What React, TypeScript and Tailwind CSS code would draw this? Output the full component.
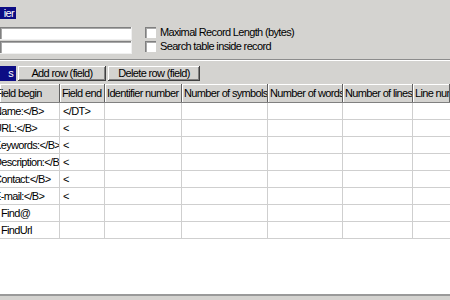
const font = { fontFamily: '"Liberation Sans", Arial, sans-serif', letterSpacing: "-0.65px" };

const headers = [
  "Field begin",
  "Field end",
  "Identifier number",
  "Number of symbols",
  "Number of words",
  "Number of lines",
  "Line number",
];

const rows: { begin: string; cut: boolean; end: string }[] = [
  { begin: "Name:</B>", cut: true, end: "</DT>" },
  { begin: "URL:</B>", cut: true, end: "<" },
  { begin: "Keywords:</B>", cut: true, end: "<" },
  { begin: "Description:</B>", cut: true, end: "<" },
  { begin: "Contact:</B>", cut: true, end: "<" },
  { begin: "E-mail:</B>", cut: true, end: "<" },
  { begin: "Find@", cut: false, end: "" },
  { begin: "FindUrl", cut: false, end: "" },
];

const raised =
  "shadow-[inset_-1px_-1px_#404040,inset_1px_1px_#ffffff,inset_-2px_-2px_#808080]";
const sunken = "shadow-[inset_1px_1px_#808080,inset_2px_2px_#a8a8a8]";

function Check({ label }: { label: string }) {
  return (
    <div className="flex items-center gap-[4px] h-[11px]">
      <div className={`w-[11px] h-[11px] bg-white ${sunken}`} />
      <span className="text-[11px] leading-none text-black">{label}</span>
    </div>
  );
}

export default function App() {
  return (
    <div
      className="w-[450px] h-[300px] overflow-hidden flex flex-col bg-[#d4d3d0] text-black"
      style={font}
    >
      {/* top panel */}
      <div className="h-[60px] border-b border-[#8c8c8c] flex flex-col">
        <div className="pt-[7px]">
          <div className="w-[16px] h-[12px] bg-[#0c0c84] text-white text-[11px] leading-[12px] text-right pr-[2px] overflow-hidden">
            ier
          </div>
        </div>
        <div className="mt-[8px] flex">
          <div className="w-[132px] flex flex-col gap-[1px]">
            <div className={`h-[13px] bg-white border-b border-r border-[#f0f0f0] ${sunken}`} />
            <div className={`h-[13px] bg-white border-b border-r border-[#f0f0f0] ${sunken}`} />
          </div>
          <div className="ml-[13px] flex flex-col gap-[3px]">
            <Check label="Maximal Record Length (bytes)" />
            <Check label="Search table inside record" />
          </div>
        </div>
      </div>

      {/* toolbar */}
      <div className="h-[24px] border-t border-white flex items-start pt-[5px] gap-[2px]">
        <div className="w-[16px] h-[15px] bg-[#0c0c84] text-white text-[11px] leading-[15px] text-right pr-[3px]">
          s
        </div>
        <button className={`w-[88px] h-[15px] bg-[#d4d3d0] text-[11px] leading-[15px] ${raised}`}>
          Add row (field)
        </button>
        <button className={`w-[92px] h-[15px] bg-[#d4d3d0] text-[11px] leading-[15px] ${raised}`}>
          Delete row (field)
        </button>
      </div>

      {/* grid */}
      <div className="flex-1 bg-white flex flex-col">
        <div className="grid grid-cols-[60px_45px_77px_86px_75px_70px_1fr] h-[19px] border-b border-[#808080] bg-[#d4d3d0]">
          {headers.map((h, i) => (
            <div
              key={h}
              className="border-r border-[#606060] overflow-hidden whitespace-nowrap text-[11px] leading-[18px] shadow-[inset_1px_1px_#ffffff]"
            >
              <span className={i === 0 ? "ml-[-5px] inline-block" : "ml-[2px] inline-block"}>{h}</span>
            </div>
          ))}
        </div>
        {rows.map((r) => (
          <div
            key={r.begin}
            className="grid grid-cols-[60px_45px_77px_86px_75px_70px_1fr] h-[17px] border-b border-[#cfcfcf]"
          >
            <div className="border-r border-[#cfcfcf] overflow-hidden whitespace-nowrap text-[11px] leading-[16px]">
              <span className={r.cut ? "ml-[-6px] inline-block" : "ml-[1px] inline-block"}>{r.begin}</span>
            </div>
            <div className="border-r border-[#cfcfcf] overflow-hidden whitespace-nowrap text-[11px] leading-[16px] pl-[3px]">
              {r.end}
            </div>
            <div className="border-r border-[#cfcfcf]" />
            <div className="border-r border-[#cfcfcf]" />
            <div className="border-r border-[#cfcfcf]" />
            <div className="border-r border-[#cfcfcf]" />
            <div />
          </div>
        ))}
      </div>

      {/* bottom edge */}
      <div className="h-[6px] border-t-2 border-[#9a9a9a] bg-[#d4d3d0]" />
    </div>
  );
}
